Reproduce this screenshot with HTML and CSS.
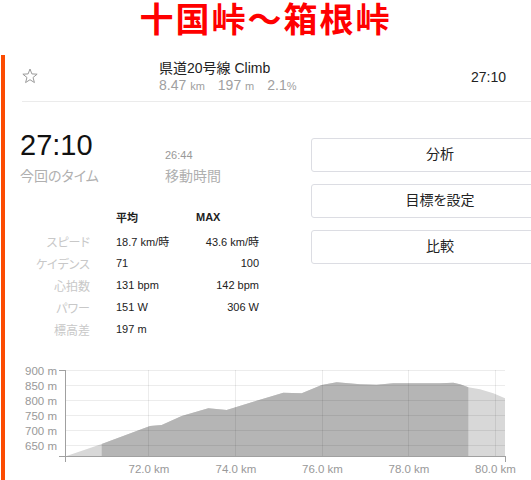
FILE: index.html
```html
<!DOCTYPE html>
<html lang="ja">
<head>
<meta charset="utf-8">
<link rel="stylesheet" href="styles.css">
</head>
<body>
<h1 class="title">十国峠～箱根峠</h1>
<div class="panel">
  <div class="seg-header">
    <div class="star-col">
      <svg class="star" width="16" height="16" viewBox="0 0 16 16"><polygon points="8,1 9.88,5.91 15.13,6.18 11.04,9.49 12.41,14.57 8,11.7 3.59,14.57 4.96,9.49 0.87,6.18 6.12,5.91"/></svg>
    </div>
    <div class="seg-info">
      <div class="seg-name">県道20号線 Climb</div>
      <div class="seg-stats"><span class="stat">8.47 <span class="unit">km</span></span><span class="stat">197 <span class="unit">m</span></span><span class="stat">2.1<span class="unit">%</span></span></div>
    </div>
    <div class="seg-time">27:10</div>
  </div>
  <div class="main">
    <div class="left">
      <div class="times">
        <div class="time-block">
          <div class="big-time">27:10</div>
          <div class="time-label">今回のタイム</div>
        </div>
        <div class="time-block moving">
          <div class="small-time">26:44</div>
          <div class="time-label">移動時間</div>
        </div>
      </div>
      <div class="stats">
        <div class="th"></div><div class="th avg">平均</div><div class="th max">MAX</div>
        <div class="lbl">スピード</div><div class="val avg">18.7 km/時</div><div class="val max">43.6 km/時</div>
        <div class="lbl">ケイデンス</div><div class="val avg">71</div><div class="val max">100</div>
        <div class="lbl">心拍数</div><div class="val avg">131 bpm</div><div class="val max">142 bpm</div>
        <div class="lbl">パワー</div><div class="val avg">151 W</div><div class="val max">306 W</div>
        <div class="lbl">標高差</div><div class="val avg">197 m</div><div class="val max"></div>
      </div>
    </div>
    <div class="buttons">
      <div class="btn">分析</div>
      <div class="btn">目標を設定</div>
      <div class="btn">比較</div>
    </div>
  </div>
  <div class="chart">
    <svg width="511" height="130" viewBox="0 0 511 130">
      <polygon class="area-light" points="46.5,106.5 46.5,106 81.7,94 130,76 141.7,75 161.7,66 188.3,58.3 206.7,60 233.3,51.7 250,46.7 263.3,42.7 281.7,43.3 301.7,35 316.7,32.3 340,34.3 356.7,34.7 373.3,33.3 420,33.3 433.3,32.7 440,34.3 448.3,37.3 460,39.3 473.3,43.3 485,48.3 485,106.5"/>
      <polygon class="area-dark" points="81.7,106.5 81.7,94 130,76 141.7,75 161.7,66 188.3,58.3 206.7,60 233.3,51.7 250,46.7 263.3,42.7 281.7,43.3 301.7,35 316.7,32.3 340,34.3 356.7,34.7 373.3,33.3 420,33.3 433.3,32.7 440,34.3 448.3,37.3 448.3,106.5"/>
      <g class="grid">
        <line x1="46" y1="20.5" x2="485" y2="20.5"/>
        <line x1="46" y1="35.5" x2="485" y2="35.5"/>
        <line x1="46" y1="50.5" x2="485" y2="50.5"/>
        <line x1="46" y1="65.5" x2="485" y2="65.5"/>
        <line x1="46" y1="80.5" x2="485" y2="80.5"/>
        <line x1="46" y1="95.5" x2="485" y2="95.5"/>
        <line x1="128.5" y1="20" x2="128.5" y2="106"/>
        <line x1="215.5" y1="20" x2="215.5" y2="106"/>
        <line x1="302.5" y1="20" x2="302.5" y2="106"/>
        <line x1="388.5" y1="20" x2="388.5" y2="106"/>
        <line x1="475.5" y1="20" x2="475.5" y2="106"/>
      </g>
      <g class="axis">
        <line x1="45.5" y1="20" x2="45.5" y2="112"/>
        <line x1="39" y1="20.5" x2="46" y2="20.5"/>
        <line x1="39" y1="106.5" x2="485.5" y2="106.5"/>
        <line x1="485.5" y1="106" x2="485.5" y2="112"/>
      </g>
      <g class="ylabels">
        <text x="37" y="25">900 m</text>
        <text x="37" y="40">850 m</text>
        <text x="37" y="55">800 m</text>
        <text x="37" y="70">750 m</text>
        <text x="37" y="85">700 m</text>
        <text x="37" y="100">650 m</text>
      </g>
      <g class="xlabels">
        <text x="129" y="122.5">72.0 km</text>
        <text x="216" y="122.5">74.0 km</text>
        <text x="302.5" y="122.5">76.0 km</text>
        <text x="389" y="122.5">78.0 km</text>
        <text x="475.5" y="122.5">80.0 km</text>
      </g>
    </svg>
  </div>
</div>
</body>
</html>
```

FILE: styles.css
```css
html, body {
  margin: 0;
  padding: 0;
  background: #fff;
}
body {
  width: 531px;
  height: 480px;
  overflow: hidden;
  font-family: "Liberation Sans", "Noto Sans CJK JP", sans-serif;
  color: #222;
}
.title {
  margin: 0;
  height: 55px;
  font-family: "Noto Sans CJK JP", sans-serif;
  font-size: 34px;
  line-height: 36px;
  font-weight: 700;
  letter-spacing: 2px;
  color: #ff0000;
  text-align: center;
}
.panel {
  margin-left: 1px;
  border-left: 4px solid #fc4c02;
  padding-left: 15px;
  width: 549px;
  height: 425px;
}
.seg-header {
  margin-left: 2px;
  height: 46px;
  border-bottom: 1px solid #ebebeb;
  display: flex;
  align-items: center;
  padding-right: 63px;
}
.star-col {
  width: 137px;
  flex: none;
  display: flex;
}
.star {
  margin-bottom: 4px;
}
.star polygon {
  fill: none;
  stroke: #9a9a9a;
  stroke-width: 1;
  stroke-linejoin: round;
}
.seg-info {
  display: flex;
  flex-direction: column;
  margin-bottom: 2px;
}
.seg-name {
  font-size: 14px;
  line-height: 18px;
  color: #222;
}
.seg-stats {
  font-size: 14px;
  line-height: 17px;
  color: #a0a0a0;
  display: flex;
  gap: 13px;
}
.unit {
  font-size: 11px;
}
.seg-time {
  margin-left: auto;
  font-size: 14px;
  color: #222;
  margin-bottom: 2px;
}
.main {
  display: flex;
  padding-top: 26px;
}
.left {
  width: 291px;
  flex: none;
}
.times {
  display: flex;
  align-items: flex-end;
}
.time-block {
  width: 145px;
}
.big-time {
  font-size: 29px;
  line-height: 34px;
  color: #111;
}
.small-time {
  font-size: 11px;
  line-height: 14px;
  color: #999;
  margin-bottom: 4px;
}
.time-label {
  margin-top: 4px;
  font-size: 14px;
  line-height: 20px;
  color: #b0b0b0;
  font-feature-settings: "palt";
}
.moving .time-label {
  margin-top: 0;
}
.stats {
  margin-top: 18px;
  display: grid;
  grid-template-columns: 70px 106px 63px;
  grid-template-rows: 26px repeat(5, 22px);
  align-items: center;
}
.th {
  font-size: 11px;
  font-weight: 700;
  color: #222;
}
.avg {
  padding-left: 26px;
}
.val {
  font-size: 11px;
  color: #222;
}
.val.max {
  text-align: right;
}
.lbl {
  font-size: 12px;
  color: #c8c8c8;
  text-align: right;
  font-feature-settings: "palt";
}
.buttons {
  width: 258px;
  margin-top: 10px;
  display: flex;
  flex-direction: column;
  gap: 12px;
}
.btn {
  box-sizing: border-box;
  height: 34px;
  padding-bottom: 5px;
  border: 1px solid #dcdde3;
  border-radius: 3px;
  display: flex;
  align-items: center;
  justify-content: center;
  font-size: 14px;
  color: #222;
  font-feature-settings: "palt";
}
.chart {
  margin-top: 10px;
}
.chart svg {
  display: block;
}
.area-light {
  fill: #d8d8d8;
}
.area-dark {
  fill: #b5b5b5;
}
.grid line {
  stroke: rgba(0, 0, 0, 0.075);
  stroke-width: 1;
}
.axis line {
  stroke: #a0a0a0;
  stroke-width: 1;
}
.ylabels text {
  font-family: "Liberation Sans", sans-serif;
  font-size: 11.5px;
  fill: #999;
  text-anchor: end;
}
.xlabels text {
  font-family: "Liberation Sans", sans-serif;
  font-size: 11.5px;
  fill: #999;
  text-anchor: middle;
}
```
